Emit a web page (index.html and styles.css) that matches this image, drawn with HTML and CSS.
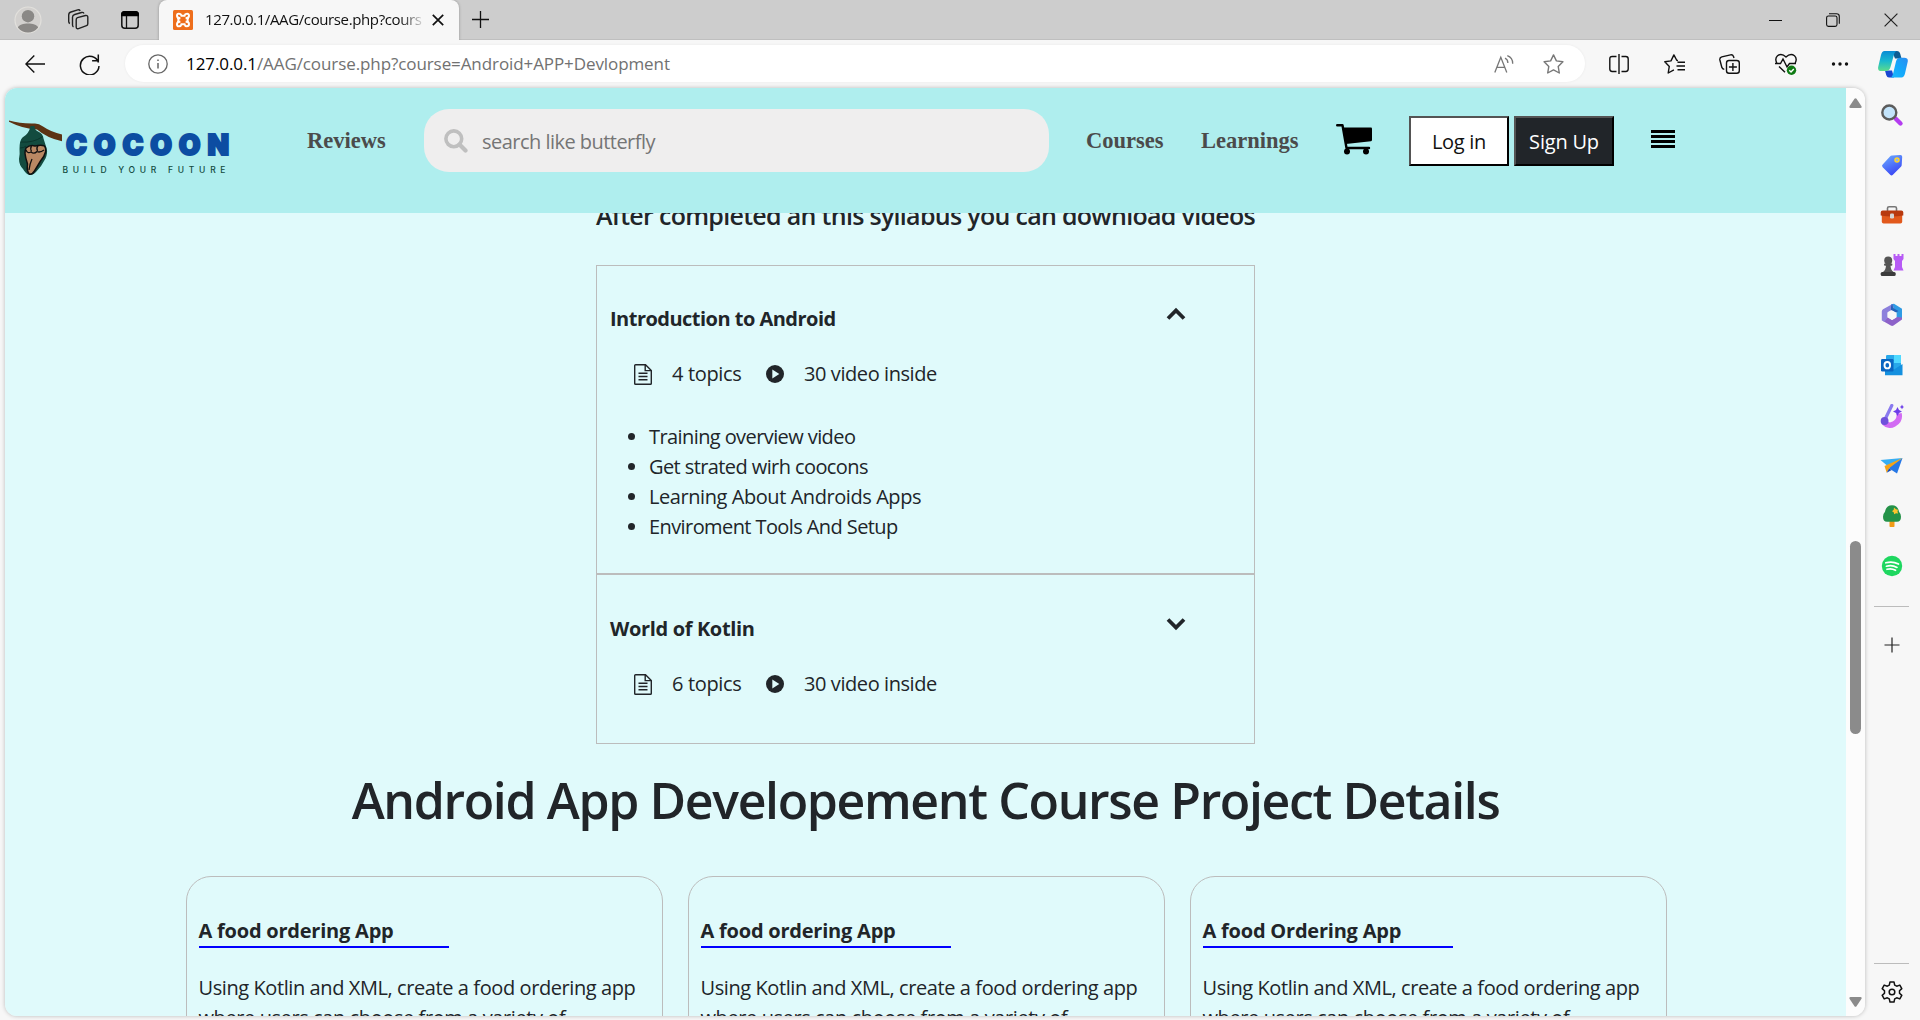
FILE: index.html
```html
<!DOCTYPE html>
<html lang="en">
<head>
<meta charset="utf-8">
<title>Cocoon - Android App Development</title>
<link rel="stylesheet" href="styles.css">
</head>
<body>
<div class="browser">
  <div class="tabstrip">
    <svg class="avatar" width="28" height="28" viewBox="0 0 28 28"><circle cx="14" cy="14" r="13" fill="#d2d0ce" stroke="#e2e0dc" stroke-width="1.2"/><circle cx="14" cy="10.2" r="6.2" fill="#8a8886"/><path d="M3.8 21.5C6 16.3 22 16.3 24.2 21.5A13 13 0 0 1 3.8 21.5z" fill="#8a8886"/></svg>
    <svg class="workspaces" width="22" height="22" viewBox="0 0 22 22" fill="none" stroke="#222" stroke-width="1.4"><path d="M10.5 8.7l8-2.2q2.300-.4 2.300 1.700v6.500q0 1.500-1.300 1.900l-8 3q-2.300.6-2.300-1.500v-7.300q0-1.600 1.300-2.100z"/><path d="M17 4.500q-.7-1.400-2.500-1l-6.800 2q-2.200.7-2.200 2.700v7.800q.1 1.500 1 2"/><path d="M13.200 1.800q-.8-1.400-2.500-.9L4 3Q1.700 3.700 1.700 6v6.500q0 1.500 1.200 2"/></svg>
    <svg class="vertical-tabs" width="18" height="18" viewBox="0 0 18 18"><rect x=".8" y=".8" width="16.400" height="16.400" rx="3" fill="none" stroke="#111" stroke-width="1.500"/><path d="M0 5.300V3.500Q0 0 3.500 0h11Q18 0 18 3.500v1.800z" fill="#000"/><path d="M5.500 5v12" stroke="#111" stroke-width="1.300"/></svg>
    <div class="tab">
      <svg width="20" height="20" viewBox="0 0 20 20"><rect width="20" height="20" rx="1.500" fill="#ee6e1c"/><path d="M7.400 8.200Q4 8.200 4 5.800T6.200 3.800Q8 3.800 8.500 5.800h3Q12 3.800 13.800 3.800 16 3.600 16 5.800T12.600 8.200M7.400 11.800Q4 11.800 4 14.200t2.200 2Q8 16.200 8.500 14.200h3q.5 2 2.300 2 2.200 0 2.200-2.200t-3.400-2.200M4.500 7Q6.500 10 4.500 13M15.500 7Q13.500 10 15.500 13" fill="none" stroke="#fff" stroke-width="2"/></svg>
      <span class="tab-title">127.0.0.1/AAG/course.php?course</span>
      <svg width="12" height="12" viewBox="0 0 12 12" stroke="#111" stroke-width="1.700"><path d="M.8.8l10.400 10.400M11.200.8L.8 11.200"/></svg>
    </div>
    <svg class="new-tab" width="17" height="17" viewBox="0 0 17 17" stroke="#111" stroke-width="1.300"><path d="M8.500 0v17M0 8.500h17"/></svg>
    <div class="window-buttons">
      <svg width="13" height="14" viewBox="0 0 13 14" stroke="#111"><path d="M0 7.500h13"/></svg>
      <svg width="14" height="14" viewBox="0 0 14 14" fill="none" stroke="#111" stroke-width="1.100"><rect x=".6" y="3" width="10.400" height="10.400" rx="1.800"/><path d="M3 .8h7.500q2.800 0 2.800 2.700v7.300"/></svg>
      <svg width="14" height="14" viewBox="0 0 14 14" stroke="#222" stroke-width="1.200"><path d="M.6.6l12.800 12.800M13.400.6L.6 13.400"/></svg>
    </div>
  </div>

  <div class="toolbar">
    <svg class="back" width="20" height="18" viewBox="0 0 20 18" fill="none" stroke="#111" stroke-width="1.400"><path d="M20 9H.9M9.300.6L.9 9l8.400 8.400"/></svg>
    <svg class="reload" width="21" height="21" viewBox="0 0 21 21" fill="none" stroke="#111" stroke-width="1.500"><path d="M19.500 8.500A9.300 9.300 0 1 0 20 12M19.300.5v6.300h-6.200"/></svg>
    <div class="address">
      <svg width="20" height="20" viewBox="0 0 20 20" fill="none" stroke="#666" stroke-width="1.300"><circle cx="10" cy="10" r="9.200"/><path d="M10 9v5.500M10 5.500v1.600" stroke-width="1.500"/></svg>
      <span class="url"><b>127.0.0.1</b>/AAG/course.php?course=Android+APP+Devlopment</span>
      <svg class="read" width="20" height="18" viewBox="0 0 20 18" fill="none" stroke="#777" stroke-width="1.300"><path d="M.8 17.500L6.800 2.300l6 15.200M2.800 12.400h8M11 3.200q2.800 1.300 2.900 4.800M13.300.7q5.500 2 5.400 8"/></svg>
      <svg width="21" height="20" viewBox="0 0 21 20" fill="none" stroke="#777" stroke-width="1.400" stroke-linejoin="round"><path d="M10.500.9l2.900 6 6.500.9-4.700 4.600 1.100 6.600-5.800-3.100L4.700 19l1.100-6.600L1.100 7.800l6.500-.9z"/></svg>
    </div>
    <div class="tools">
      <svg width="20" height="20" viewBox="0 0 20 20" fill="none" stroke="#111" stroke-width="1.400"><path d="M7.500 2.500H3.200Q.8 2.500.8 4.900v10.200q0 2.400 2.400 2.400h4.300M12.500 2.500h4.300q2.400 0 2.400 2.400v10.200q0 2.400-2.400 2.400h-4.300M10 0v20"/></svg>
      <svg width="21" height="20" viewBox="0 0 21 20" fill="none" stroke="#111" stroke-width="1.400" stroke-linejoin="round"><path d="M14 6.500l-1.300-.2L9.900.9l-2.900 6-6.200.9 4.500 4.600-1.100 6.600 5.700-3.100M13.500 8.200H21M12.500 12H21M13.500 15.800H21"/></svg>
      <svg width="21" height="20" viewBox="0 0 21 20" fill="none" stroke="#111" stroke-width="1.400"><rect x="7.500" y="6.500" width="12.800" height="12.800" rx="2.500"/><path d="M13.900 9v8M9.900 13h8M15 4l-.5-1.400Q13.700.4 11.500.9l-8.700 2Q.4 3.600.9 6l1.900 7.300q.5 1.800 2.500 2.100"/></svg>
      <svg width="22" height="22" viewBox="0 0 22 22" fill="none" stroke="#111" stroke-width="1.400"><path d="M1.800 10Q-.5 5.500 2.500 2.800 6.500-.3 11 4q4.500-4.300 8.500-1.200 3 2.700.7 7.200M0 10.500h5.500L8 6l4 8 2.500-3.500H21M4 13.500l6 5.800"/><circle cx="16.500" cy="17.200" r="4.700" fill="#0f7b14" stroke="none"/><path d="M14.300 17.300l1.700 1.600 2.800-3" stroke="#fff"/></svg>
      <svg width="18" height="20" viewBox="0 0 18 20" fill="#111"><circle cx="2.500" cy="10" r="1.700"/><circle cx="9" cy="10" r="1.700"/><circle cx="15.500" cy="10" r="1.700"/></svg>
    </div>
    <svg class="copilot" width="30" height="27" viewBox="0 0 30 27">
      <defs>
        <linearGradient id="cpa" x1="0" y1="0" x2="0" y2="1"><stop offset="0" stop-color="#078bd5"/><stop offset=".5" stop-color="#18b8cf"/><stop offset="1" stop-color="#5cdc8c"/></linearGradient>
        <linearGradient id="cpb" x1="1" y1="0" x2="0" y2="1"><stop offset="0" stop-color="#2c8cf0"/><stop offset=".5" stop-color="#14a8fb"/><stop offset="1" stop-color="#1bb9fb"/></linearGradient>
      </defs>
      <path d="M14 0h5q2.500 0 3.300 3l1.200 4.500h-6.500z" fill="#0d5c93"/><path d="M7 19.500h7l2 7h-5q-2 0-2.800-2.500z" fill="#1947d1"/>
      <path d="M6.500 0H19q-2 0-3 3.500L12.500 16q-1 4-4.500 4H3.500Q-.8 20 .3 15.500L3 4Q4 0 6.500 0z" fill="url(#cpa)"/>
      <path d="M23.500 26.500H12q2 0 3-3.500l3-12.500q1-3.700 4-3.700h4.300q4.400 0 3.300 4.500L27 22.500q-1 4-3.500 4z" fill="url(#cpb)"/>
    </svg>
  </div>

  <div class="workspace">
    <div class="viewport">
      <div class="page">
        <header class="site-header">
          <svg class="logo" width="226" height="60" viewBox="0 0 226 60">
            <path d="M0 .5Q12 4 26 3.500q4 0 8 3 8 5.500 19 8v6.800Q38 18 28 9.500 14 9 0 1.800z" fill="#5c3314"/>
            <path d="M21.500 6h4q0 4 3.500 5.500 5 2 5.500 7l3 9.500q1.500 5-1 10.500-4 8-9.500 13.500-3 3.500-6 3-4-.5-7-6-4-4-4-10 1-6 .5-10 0-9 3-11.500 6.500-3.500 8-11.500z" fill="#134b3f"/>
            <path d="M12 22q12 1 21-5M11 28q4 0 6-2" fill="none" stroke="#0b352c"/>
            <path d="M17 28Q21 24.500 26 26q6-1.500 9-.3 2.300 1.800 1.500 6.300-1 4.500-5 9l-6 10q-2 3.500-5 3.200-3-2.700-2-10.200-2-6-2.500-10.500Q16 30.500 17 28z" fill="#b98863" stroke="#101010" stroke-width="1.500"/>
            <path d="M17 30q1.500 4 5 2 3 2.500 6-.5 3 1.500 7-1.500M22.500 31.500Q21 28 22.500 26M28.500 31Q27 28 29 25.500M20 50q1-7 3-11" fill="none" stroke="#101010" stroke-width="1.300"/>
            <text class="logo-name" x="57" y="35" textLength="163">COCOON</text>
            <text class="logo-tag" x="53.500" y="53" textLength="163">BUILD YOUR FUTURE</text>
          </svg>
          <a class="nav nav-reviews">Reviews</a>
          <div class="search">
            <svg width="24" height="24" viewBox="0 0 24 24" fill="none" stroke="#bfbfbf"><circle cx="9.800" cy="9.800" r="7.900" stroke-width="3.600"/><path d="M15.500 15.500l6 6" stroke-width="4.200" stroke-linecap="round"/></svg>
            <span>search like butterfly</span>
          </div>
          <a class="nav nav-courses">Courses</a>
          <a class="nav nav-learnings">Learnings</a>
          <svg class="cart" width="36" height="31" viewBox="0 0 36 31"><path d="M1.200 1.300h5.300L10.500 24H33" fill="none" stroke="#000" stroke-width="2.400" stroke-linecap="round" stroke-linejoin="round"/><path d="M7.200 3.500H35q1 0 1 1V16q0 1-1 1.200L9.800 20z"/><circle cx="11" cy="27.600" r="3"/><circle cx="30" cy="27.600" r="3"/></svg>
          <div class="btn btn-login">Log in</div>
          <div class="btn btn-signup">Sign Up</div>
          <svg class="menu" width="24" height="19" viewBox="0 0 24 19"><path d="M0 0h24v3H0zM0 5h24v3H0zM0 10h24v3H0zM0 15h24v3H0z"/></svg>
        </header>
        <main class="content">
          <h4 class="lead">After completed an this syllabus you can download videos</h4>
          <section class="syllabus">
            <article class="module">
              <div class="module-head"><h5 class="w-intro">Introduction to Android</h5>
                <svg width="20" height="14" viewBox="0 0 20 14" fill="none" stroke="#212529" stroke-width="3.800"><path d="M2 11.500L10 3.500l8 8"/></svg></div>
              <div class="meta">
                <svg width="18" height="21" viewBox="0 0 18 21" fill="none" stroke="#212529" stroke-width="1.400"><path d="M11.500.7H1.600q-.9 0-.9.900v17.800q0 .9.900.9h14.800q.9 0 .9-.9V6.500zM11.200.9v5.700h6"/><path d="M4.500 9.300h9M4.500 12.500h9M4.500 15.700h9" stroke-width="1.500"/></svg>
                <span class="topics">4 topics</span>
                <svg width="18" height="18" viewBox="0 0 18 18"><circle cx="9" cy="9" r="9" fill="#212529"/><path d="M6.300 4.500l7 4.500-7 4.500z" fill="#e0fafb"/></svg>
                <span class="videos">30 video inside</span>
              </div>
              <ul>
                <li class="tight">Training overview video</li>
                <li class="tight">Get strated wirh coocons</li>
                <li>Learning About Androids Apps</li>
                <li class="tight">Enviroment Tools And Setup</li>
              </ul>
            </article>
            <article class="module module-closed">
              <div class="module-head"><h5>World of Kotlin</h5>
                <svg width="20" height="14" viewBox="0 0 20 14" fill="none" stroke="#212529" stroke-width="3.800"><path d="M2 2.500l8 8 8-8"/></svg></div>
              <div class="meta">
                <svg width="18" height="21" viewBox="0 0 18 21" fill="none" stroke="#212529" stroke-width="1.400"><path d="M11.500.7H1.600q-.9 0-.9.900v17.800q0 .9.900.9h14.800q.9 0 .9-.9V6.500zM11.200.9v5.700h6"/><path d="M4.500 9.300h9M4.500 12.500h9M4.500 15.700h9" stroke-width="1.500"/></svg>
                <span class="topics">6 topics</span>
                <svg width="18" height="18" viewBox="0 0 18 18"><circle cx="9" cy="9" r="9" fill="#212529"/><path d="M6.300 4.500l7 4.500-7 4.500z" fill="#e0fafb"/></svg>
                <span class="videos">30 video inside</span>
              </div>
            </article>
          </section>
          <h1>Android App Developement Course Project Details</h1>
          <section class="projects">
            <article class="card"><h5>A food ordering App</h5><p>Using Kotlin and XML, create a food ordering app<br>where users can choose from a variety of</p></article>
            <article class="card"><h5>A food ordering App</h5><p>Using Kotlin and XML, create a food ordering app<br>where users can choose from a variety of</p></article>
            <article class="card"><h5>A food Ordering App</h5><p>Using Kotlin and XML, create a food ordering app<br>where users can choose from a variety of</p></article>
          </section>
        </main>
      </div>
      <div class="scrollbar">
        <svg width="13" height="10" viewBox="0 0 13 10" fill="#8b8b8b"><path d="M5.500.8q1-1.200 2 0l5 7.400q.6 1.600-1 1.800h-10Q0 9.800.5 8.200z"/></svg>
        <div class="thumb"></div>
        <svg class="arrow-down" width="13" height="10" viewBox="0 0 13 10" fill="#8b8b8b"><path d="M5.500 9.200q1 1.200 2 0l5-7.400Q13.100.2 11.500 0h-10Q0 .2.500 1.800z"/></svg>
      </div>
    </div>
    <aside class="sidebar">
      <svg width="24" height="24" viewBox="0 0 24 24"><path d="M15.500 15.500l5 5" stroke="#b43df0" stroke-width="4.400" stroke-linecap="round"/><circle cx="9.300" cy="9.500" r="7" fill="#c3e4fb" stroke="#5c5c5c" stroke-width="2.400"/></svg>
      <svg width="24" height="24" viewBox="0 0 24 24"><defs><linearGradient id="tg" x1="0" y1="0" x2=".5" y2="1"><stop offset="0" stop-color="#6db0ff"/><stop offset="1" stop-color="#3b48f5"/></linearGradient></defs><path d="M12 2.500L20.500 2q1.700 0 1.700 1.700L21.700 12q0 1-.8 1.800l-8 8q-1.400 1.200-2.700 0l-7.500-7.500q-1.400-1.400 0-2.700l7.300-8.200q.8-.8 2-.9z" fill="url(#tg)"/><circle cx="17" cy="7" r="2" fill="#8db3f4" stroke="#ffd42a" stroke-width="1.500"/></svg>
      <svg width="24" height="24" viewBox="0 0 24 24"><path d="M7.500 8V5.300q0-1.600 1.600-1.600h5.800q1.600 0 1.600 1.600V8" fill="none" stroke="#777" stroke-width="1.600"/><rect x="1.800" y="11" width="20.400" height="9.500" rx="1.800" fill="#e2591c"/><path d="M.7 9.500q0-2 2-2h18.600q2 0 2 2v3q-11.300 2.200-22.600 0z" fill="#b8390e"/><rect x="10" y="10.500" width="4" height="5" rx="1.300" fill="#d5d5d5"/></svg>
      <svg width="24" height="24" viewBox="0 0 24 24"><path d="M13.500 1h2v2h2V1h2v2h2V1h2v5l-1.500 2v6l1.500 3.500H13.500L15 14V8l-1.500-2z" fill="#b75bf5"/><g fill="#555"><circle cx="8.200" cy="7.500" r="4"/><rect x="4" y="10.500" width="8.400" height="2.200" rx="1"/><path d="M6 12h4.500q0 5 3 7H3q3-2 3-7z"/><rect x=".7" y="19" width="15" height="4" rx="1.500" fill="#3c3c3c"/></g></svg>
      <svg width="24" height="24" viewBox="0 0 24 24"><path d="M11 1.300L14 .8l8 5v10L16.500 15V9L11 6z" fill="#2f9be4"/><path d="M22 14.500v2L13.500 22.500q-1.300.8-2.700 0L3 18l5-4 4 3 5-3z" fill="#8d62c9"/><path d="M12.500 1L3 6.300Q1.800 7 1.800 8.500v9l2.700 1.300 3-4.500v-5L14 5.500z" fill="#8c80dc"/><path d="M12.500 1q-1.500 1-1.500 3v3l5 2.500L18.500 8 13 5z" fill="#2563b8"/><path d="M12 7.500l4.300 2.400v4.700L12 17l-4.300-2.400V9.900z" fill="#f7f7f7"/></svg>
      <svg width="24" height="24" viewBox="0 0 24 24"><rect x="6" y="2" width="15" height="16" rx="1.200" fill="#28a8ea"/><path d="M14 2h7v8h-7z" fill="#50d9ff"/><path d="M5 22.300V11l9 5.500 8.500-5.500v11.300z" fill="#1490df"/><rect x="1" y="6" width="12.500" height="12.500" rx="1.200" fill="#0a66c2"/><ellipse cx="7.300" cy="12.200" rx="2.800" ry="3.200" fill="none" stroke="#fff" stroke-width="1.900"/></svg>
      <svg width="24" height="24" viewBox="0 0 24 24"><path d="M4 18.500q4.500 4.500 10 1.500 6.500-3.500 5-10.500" fill="none" stroke="#d26bf3" stroke-width="5.500"/><path d="M11.800 1.500L5 15.500" stroke="#8a7aef" stroke-width="3.200" stroke-linecap="round"/><circle cx="4.600" cy="17" r="3.900" fill="#6f50db"/><path d="M17.500 3l1.500 3 3 1.500-3 1.500-1.500 3-1.500-3-3-1.500 3-1.500zM22 .6l.8 1.600 1.200.7-1.200.8L22 5.200l-.8-1.500-1.500-.8 1.500-.7z" fill="#6d3ee9"/></svg>
      <svg width="24" height="24" viewBox="0 0 24 24"><path d="M.5 6L22.500 4 10 14z" fill="#37aef2"/><path d="M22.500 4L17 19.500 8.500 14z" fill="#2678e6"/><path d="M22.500 4L4.500 12l2.200 6.800 3-5z" fill="#f5a316"/><path d="M9 14.500l-2.300 4.300 5-2.700z" fill="#174ab3"/></svg>
      <svg width="24" height="24" viewBox="0 0 24 24"><rect x="9.500" y="15" width="5" height="8" rx=".8" fill="#f29b17"/><path d="M12 1.300q6 0 7 6.500 2 2 2 5 0 5-4 5H7q-4 0-4-5 0-3 2-5 1-6.500 7-6.500z" fill="#249248"/><path d="M14 3.500l2 1.700 2 .5-.5 1.800.5 2-2-.3-1.800 1-.5-2-1.700-1 1.700-1.400z" fill="#ffc42d"/></svg>
      <svg width="24" height="24" viewBox="0 0 24 24"><circle cx="12" cy="12" r="10.200" fill="#1ed760"/><path d="M5.800 8.800q6.700-2 12.700 1.300M6.400 12.200q5.600-1.600 10.600 1.200M7 15.300q4.600-1.200 8.500 1" fill="none" stroke="#fff" stroke-width="1.700" stroke-linecap="round"/></svg>
      <hr>
      <svg class="add" width="16" height="16" viewBox="0 0 16 16" stroke="#222" stroke-width="1.200"><path d="M8 .5v15M.5 8h15"/></svg>
      <hr class="bottom-rule">
      <svg class="gear" width="22" height="22" viewBox="0 0 22 22" fill="none" stroke="#111" stroke-width="1.500" stroke-linejoin="round"><path d="M9 .9h4l.7 3.200 2 1.100 3.100-1.100 2 3.500-2.300 2.200v2.400l2.300 2.200-2 3.500-3.100-1.100-2 1.100-.7 3.200H9l-.7-3.200-2-1.100-3.100 1.100-2-3.500 2.300-2.200V9.800L1.200 7.600l2-3.500 3.100 1.100 2-1.100z"/><circle cx="11" cy="11" r="2.800"/></svg>
    </aside>
  </div>
</div>
</body>
</html>
```
FILE: styles.css
```css
* { box-sizing: border-box; }
body { margin: 0; font-family: "Open Sans", "Noto Sans", sans-serif; color: #212529; }
svg { flex: none; display: block; }
h1, h4, h5, p, ul { margin: 0; }

.browser { width: 1920px; height: 1020px; overflow: hidden; background: #f7f7f7; display: flex; flex-direction: column; }

.tabstrip { height: 40px; flex: none; background: #cdcdcd; display: flex; align-items: center; border-bottom: 1px solid #bfbfbf; }
.avatar { margin-left: 14px; }
.workspaces { margin-left: 25px; }
.vertical-tabs { margin-left: 32px; }
.tab { width: 300px; height: 40px; margin: 0 0 -1px 20px; padding: 0 15px 0 14px; background: #f7f7f7; border-radius: 8px 8px 0 0; display: flex; align-items: center; box-shadow: 0 0 3px rgba(0,0,0,.3); clip-path: inset(0 -4px 0 -4px); }
.tab-title { width: 217px; margin: 0 10px 2px 12px; overflow: hidden; white-space: nowrap; font-size: 15px; letter-spacing: -.38px; color: #111; -webkit-mask-image: linear-gradient(90deg, #000 90%, rgba(0,0,0,.15)); mask-image: linear-gradient(90deg, #000 90%, rgba(0,0,0,.15)); }
.new-tab { margin-left: 13px; }
.window-buttons { margin-left: auto; margin-right: 22px; display: flex; gap: 44px; }

.toolbar { height: 48px; flex: none; display: flex; align-items: center; }
.back { margin-left: 25px; }
.reload { margin-left: 34px; }
.address { width: 1460px; height: 37px; margin: 0 0 1px 25px; padding: 0 21px 0 23px; border-radius: 19px; background: #fff; display: flex; align-items: center; box-shadow: 0 0 3px rgba(0,0,0,.06); }
.url { flex: 1; margin-left: 18px; font-size: 17px; line-height: 24px; letter-spacing: -.09px; color: #717171; }
.url b { font-weight: 400; color: #000; }
.read { margin-right: 29px; }
.tools { margin-left: 24px; width: 240px; display: flex; align-items: center; justify-content: space-between; }
.copilot { margin-left: 29px; }

.workspace { height: 932px; display: flex; }
.viewport { width: 1860px; height: 928px; margin-left: 5px; display: flex; border-radius: 12px; overflow: hidden; box-shadow: 0 0 4px rgba(0,0,0,.25); }
.page { width: 1841px; height: 928px; overflow: hidden; background: #e0fafb; }

.site-header { height: 125px; background: #afeeee; display: flex; align-items: flex-start; position: relative; z-index: 1; }
.logo { margin: 32px 0 0 4px; }
.logo-name { font-family: Inter, sans-serif; font-weight: 900; font-size: 28px; fill: #0c4da2; stroke: #0c4da2; stroke-width: 2px; }
.logo-tag { font-family: Inter, sans-serif; font-weight: 500; font-size: 8.500px; fill: #134b3f; }
.nav { font: bold 22.500px/26px "Liberation Serif", serif; color: #4b4b4b; margin-top: 40px; }
.nav-reviews { width: 79px; margin-left: 72px; }
.search { width: 625px; height: 63px; margin: 21px 0 0 38px; padding-left: 20px; border-radius: 25px; background: #efeeee; display: flex; align-items: center; font-size: 20px; letter-spacing: -.53px; color: #757575; }
.search span { margin: 1px 0 0 14px; }
.nav-courses { width: 78px; margin-left: 37px; }
.nav-learnings { width: 98px; margin-left: 37px; }
.cart { margin: 36px 0 0 37px; }
.btn { width: 100px; height: 50px; margin-top: 28px; border: 2px outset #000; background: #fff; color: #111; font-size: 20px; line-height: 48px; text-align: center; letter-spacing: -.3px; }
.btn-login { margin-left: 37px; }
.btn-signup { margin-left: 5px; background: #212529; color: #fff; letter-spacing: -.2px; }
.menu { margin: 42px 0 0 37px; }

.content { display: flex; flex-direction: column; align-items: center; font-size: 20px; line-height: 30px; }
.lead { margin-top: -13px; height: 30px; white-space: nowrap; font-size: 25px; font-weight: 550; letter-spacing: -.7px; }
.syllabus { width: 659px; margin-top: 35px; }
.module { height: 309px; padding: 38px 12px 0 13px; border: 1px solid #bcbcbc; }
.module-closed { height: 170px; padding-top: 39px; }
.module-head { height: 30px; display: flex; justify-content: space-between; padding-right: 56px; }
.module-head svg { margin-top: 3px; }
.module-head h5 { font-size: 20px; font-weight: 700; letter-spacing: -.35px; }
.module-head .w-intro { letter-spacing: -.52px; }
.meta { display: flex; align-items: center; height: 30px; margin-top: 25px; padding-left: 24px; letter-spacing: -.42px; }
.topics { width: 72px; margin: 0 22px 0 20px; letter-spacing: -.35px; }
.videos { margin-left: 20px; }
.module ul { margin-top: 33px; padding-left: 39px; letter-spacing: -.43px; }
.module .tight { letter-spacing: -.59px; }

h1 { margin-top: 26px; font-size: 50px; line-height: 60px; font-weight: 550; letter-spacing: -1.37px; white-space: nowrap; }
.projects { display: flex; gap: 25px; margin-top: 46px; padding-left: 1px; }
.card { width: 477px; height: 240px; padding: 39px 12px 0; border: 1px solid #bcbcbc; border-radius: 25px; }
.card h5 { width: 250px; height: 32px; font-size: 20px; font-weight: 700; letter-spacing: -.22px; border-bottom: 2px solid #00f; }
.card p { margin-top: 25px; letter-spacing: -.41px; white-space: nowrap; }

.scrollbar { width: 19px; background: #fcfcfc; display: flex; flex-direction: column; align-items: center; padding: 10px 0 9px; }
.thumb { width: 11px; height: 193px; margin-top: 433px; border-radius: 6px; background: #8b8b8b; }
.arrow-down { margin-top: auto; }

.sidebar { width: 35px; margin-left: 9px; display: flex; flex-direction: column; align-items: center; gap: 26.100px; padding-top: 15px; }
.sidebar hr { width: 35px; height: 1px; flex: none; margin: 2px 0 0; border: 0; background: #bcbcbc; }
.sidebar .add { margin-top: 4px; }
.sidebar .bottom-rule { margin-top: 284px; }
.sidebar .gear { margin-top: -9px; }
```
